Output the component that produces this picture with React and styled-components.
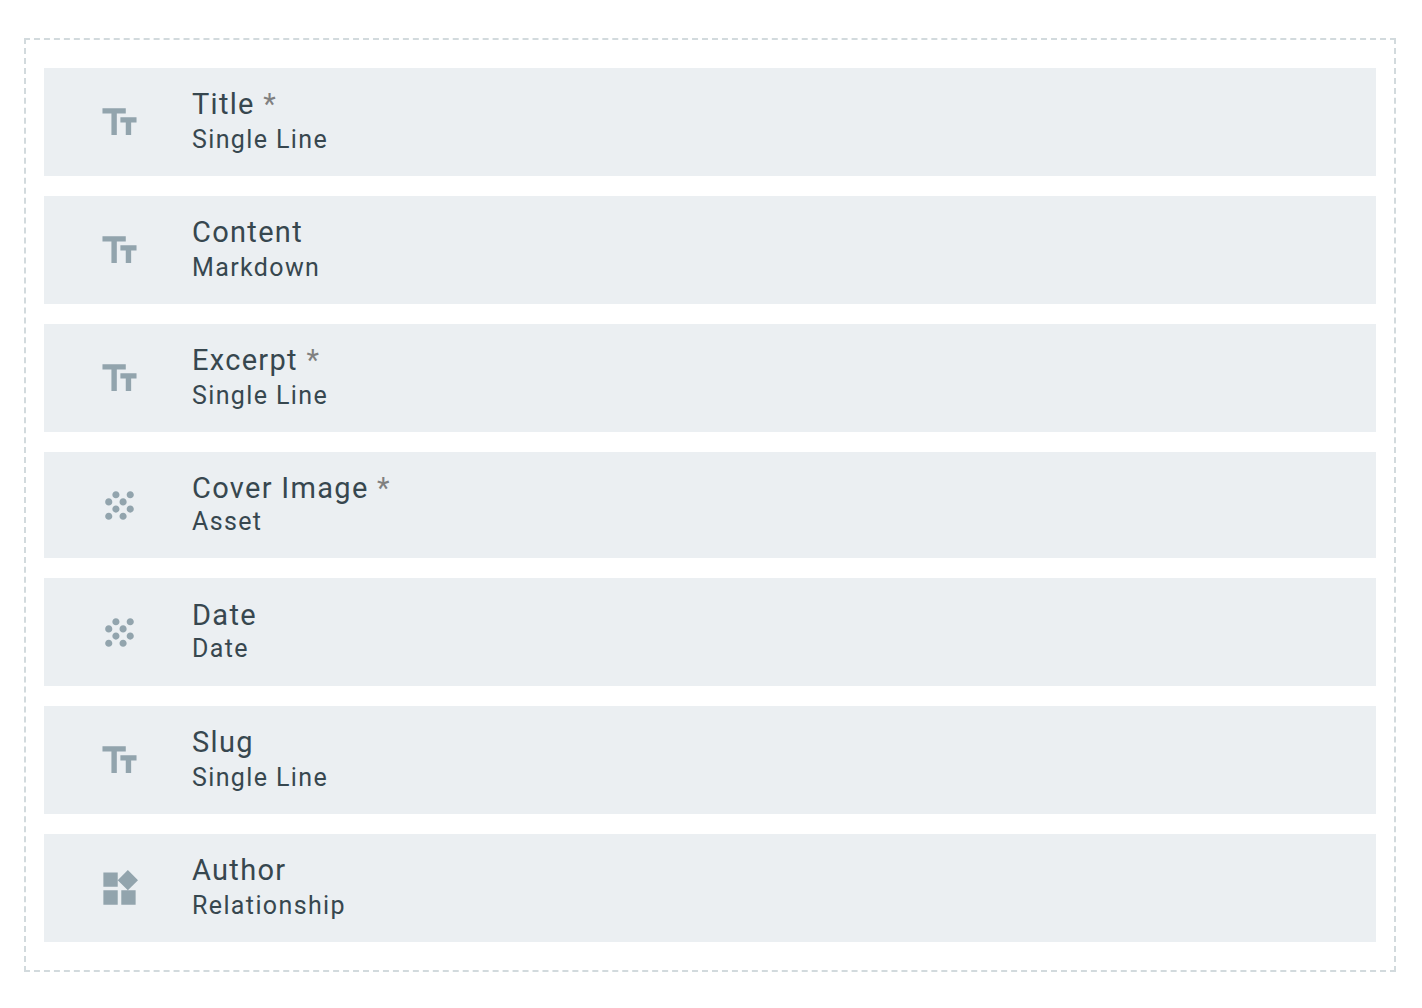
import React from "react";
import styled, { createGlobalStyle } from "styled-components";
import { MdTextFields, MdGrain, MdWidgets } from "react-icons/md";

const GlobalStyle = createGlobalStyle`
  *, *::before, *::after { box-sizing: border-box; }
  body {
    margin: 0;
    background: #ffffff;
    font-family: Roboto, "Liberation Sans", sans-serif;
  }
`;

const Page = styled.main`
  padding: 38px 26px 36px 24px;
`;

const FieldList = styled.ul`
  display: flex;
  flex-direction: column;
  gap: 20px;
  margin: 0;
  padding: 28px 18px;
  border: 2px dashed #d2dadd;
  list-style: none;
`;

const FieldRow = styled.li`
  display: flex;
  align-items: center;
  min-height: ${({ $short }) => ($short ? "106px" : "108px")};
  background: #ebeff2;
`;

const IconCell = styled.span`
  display: flex;
  flex: none;
  width: 148px;
  padding-left: 54px;
  color: #92a4ad;
`;

const FieldText = styled.div`
  display: flex;
  flex-direction: column;
  gap: ${({ $tight }) => ($tight ? "0" : "2px")};
  min-width: 0;
  color: #37474f;
  line-height: 34px;
`;

const FieldName = styled.div`
  font-size: 29px;
  letter-spacing: 0.045em;
`;

const Required = styled.span`
  color: #808080;
`;

const FieldType = styled.div`
  font-size: 25px;
  letter-spacing: 0.055em;
`;

const icons = { text: MdTextFields, grain: MdGrain, widgets: MdWidgets };

const fields = [
  { name: "Title", type: "Single Line", icon: "text", required: true },
  { name: "Content", type: "Markdown", icon: "text" },
  { name: "Excerpt", type: "Single Line", icon: "text", required: true },
  { name: "Cover Image", type: "Asset", icon: "grain", required: true, tight: true, short: true },
  { name: "Date", type: "Date", icon: "grain", tight: true },
  { name: "Slug", type: "Single Line", icon: "text" },
  { name: "Author", type: "Relationship", icon: "widgets" },
];

export default function App() {
  return (
    <>
      <GlobalStyle />
      <Page>
        <FieldList>
          {fields.map(({ name, type, icon, required, tight, short }) => {
            const Icon = icons[icon];
            return (
              <FieldRow key={name} $short={short}>
                <IconCell>
                  <Icon size={43} aria-hidden="true" />
                </IconCell>
                <FieldText $tight={tight}>
                  <FieldName>
                    {name}
                    {required && <Required> *</Required>}
                  </FieldName>
                  <FieldType>{type}</FieldType>
                </FieldText>
              </FieldRow>
            );
          })}
        </FieldList>
      </Page>
    </>
  );
}
